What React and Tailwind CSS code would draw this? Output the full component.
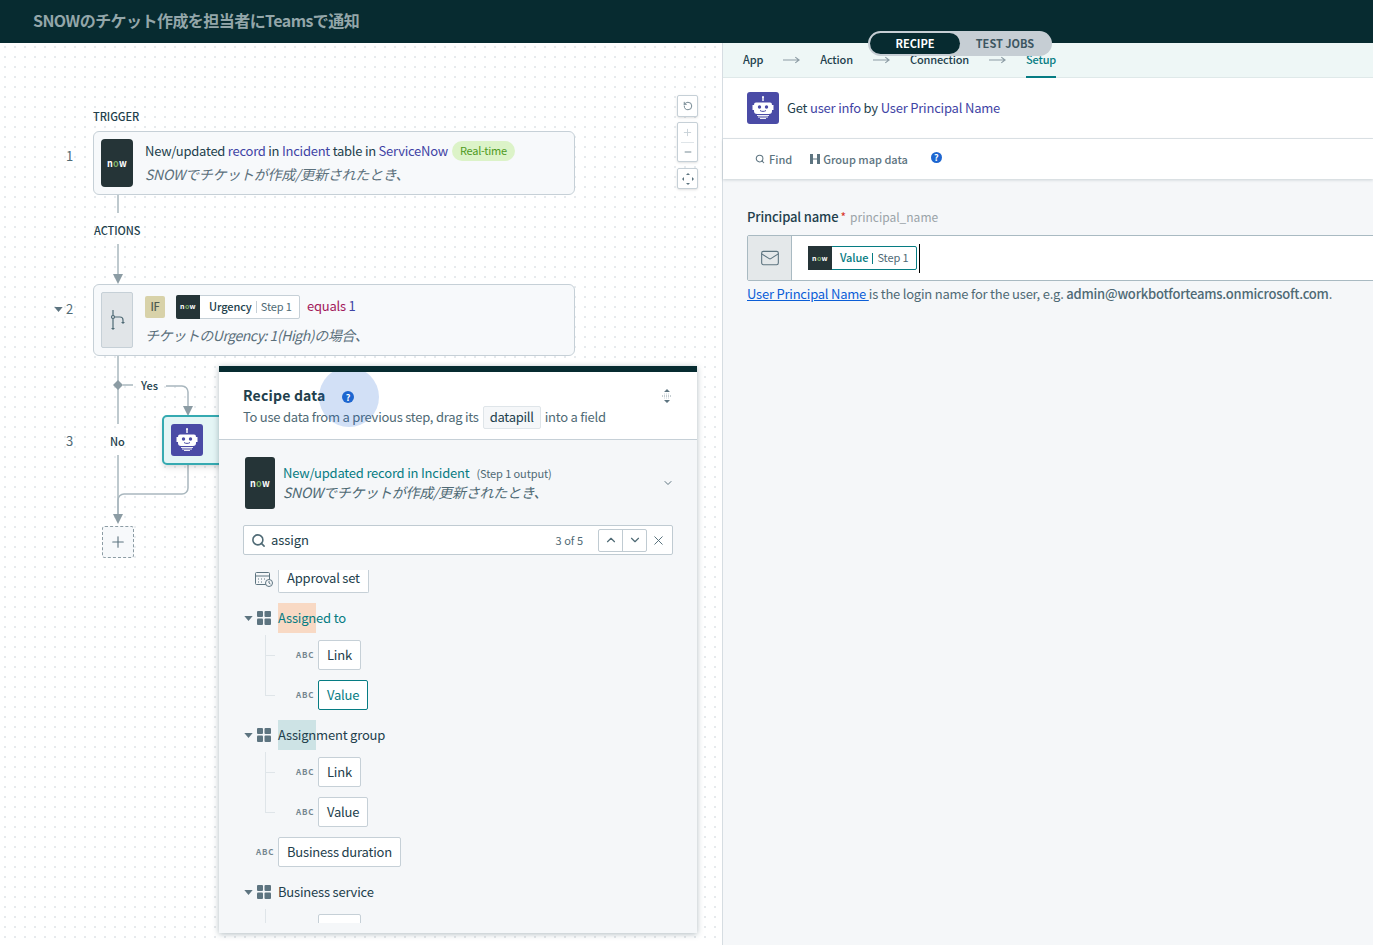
import React from "react";
import { ChevronDown, ChevronUp, X, Search, Plus, Minus, RotateCcw, Mail } from "lucide-react";

const NowLogo = ({ size = "text-[9px]" }) => (
  <span className={`${size} font-bold text-white tracking-[0.3px] leading-none`}>
    n<span className="text-[#7fb069]">o</span>w
  </span>
);

const Bot = ({ className }) => (
  <svg viewBox="0 0 32 32" className={className}>
    <rect width="32" height="32" rx="3" fill="#4a4ba6" />
    <path d="M16 5v4" stroke="#fff" strokeWidth="1.4" />
    <circle cx="16" cy="5" r="1" fill="#fff" />
    <path d="M9 10.500h14a2 2 0 0 1 2 2V19a3 3 0 0 1-3 3H10a3 3 0 0 1-3-3v-6.500a2 2 0 0 1 2-2z" fill="#fff" />
    <rect x="5.500" y="13" width="1.500" height="5" fill="#fff" />
    <rect x="25" y="13" width="1.500" height="5" fill="#fff" />
    <circle cx="12.500" cy="15" r="1.700" fill="#4a4ba6" />
    <circle cx="19.500" cy="15" r="1.700" fill="#4a4ba6" />
    <path d="M13 18.500c1.500 1.200 4.500 1.200 6 0" stroke="#4a4ba6" strokeWidth="1" fill="none" />
    <path d="M10 23.500h12M11 25h10M13 26.500h6" stroke="#fff" strokeWidth="0.900" />
  </svg>
);

const Help = ({ className }) => (
  <span className={`inline-flex items-center justify-center rounded-full bg-[#1e66d0] text-white font-bold leading-none text-[9px] ${className}`}>?</span>
);

const Abc = () => (
  <span className="text-[8px] font-bold tracking-[0.8px] text-[#73858f] leading-none">ABC</span>
);

const GridIcon = () => (
  <svg viewBox="0 0 14 14" className="w-[14px] h-[14px]" fill="#5d7480">
    <rect width="6" height="6" rx="1" />
    <rect x="7.500" width="6.500" height="6" rx="1" />
    <rect y="7.500" width="6" height="6.500" rx="1" />
    <rect x="7.500" y="7.500" width="6.500" height="6.500" rx="1" />
  </svg>
);

const Caret = () => (
  <svg viewBox="0 0 10 6" className="w-[9px] h-[5px]" fill="#5d7480"><path d="M0 0h10L5 6z" /></svg>
);

const Pill = ({ children, active }) => (
  <span className={`h-[30px] min-w-[43px] px-2 pb-[1px] inline-flex items-center bg-white rounded-[2px] border text-[13px] tracking-[-0.2px] ${active ? "border-[#067c83] text-[#067c83]" : "border-[#c6d0d7] text-[#22404c]"}`}>
    {children}
  </span>
);

const SubTree = ({ highlight, hlText, rest, textColor, children }) => (
  <div className="flex flex-col">
    <div className="h-[30px] flex items-center">
      <span className="w-[10px] ml-[24px] flex justify-center mr-[4px]"><Caret /></span>
      <GridIcon />
      <span className={`ml-[7px] text-[13px] tracking-[-0.2px] h-[30px] flex items-center whitespace-nowrap ${textColor}`}>
        <span className={`h-[30px] flex items-center pb-[1px] ${highlight}`}>{hlText}</span>
        <span className="pb-[1px]">{rest}</span>
      </span>
    </div>
    {children}
  </div>
);

const Leaf = ({ label, active, last }) => (
  <div className="h-[30px] flex items-center relative">
    <span className="absolute left-[46px] w-[10px] border-b border-[#dfe5e9] top-[15px]" />
    <span className={`absolute left-[46px] w-px bg-[#dfe5e9] ${last ? "top-[-25px] h-[40px]" : "top-[-5px] h-[20px]"}`} />
    <span className="ml-[77px] w-[22px] flex items-center"><Abc /></span>
    <Pill active={active}>{label}</Pill>
  </div>
);

export default function App() {
  return (
    <div className="w-[1373px] h-[945px] overflow-hidden relative flex flex-col bg-white text-[#22404c] font-['Noto_Sans_CJK_JP','Noto_Sans',sans-serif] leading-[18px]">
      <header className="h-[43px] shrink-0 bg-[#072b30] flex items-center pl-[33px] pb-[4px]">
        <h1 className="text-[16px] font-bold text-[#93a6a9] tracking-[-0.55px]">SNOWのチケット作成を担当者にTeamsで通知</h1>
      </header>

      <div className="absolute left-[868px] top-[31px] w-[184px] h-[25px] bg-[#c6ced4] rounded-full flex items-center p-[2px] z-20 text-[11px] font-semibold">
        <span className="w-[90px] h-[21px] bg-[#072b30] text-white rounded-full flex items-center justify-center pb-[1px]">RECIPE</span>
        <span className="flex-1 text-[#3d5661] text-center pb-[1px]">TEST JOBS</span>
      </div>

      <div className="flex flex-1 min-h-0">
        {/* Canvas */}
        <div className="w-[722px] shrink-0 relative bg-white bg-[radial-gradient(#e6eaed_1px,transparent_1.2px)] bg-[length:10px_10px] bg-[position:0px_-1px]">
          <svg className="absolute left-0 top-0 w-[722px] h-[902px]" viewBox="0 0 722 902" fill="none" stroke="#a9b7be" strokeWidth="1.500">
            <path d="M118 152v18" />
            <path d="M118 201v32" />
            <path d="M118 313v68" />
            <path d="M118 412v65" />
            <path d="M166 343h16a6 6 0 0 1 6 6v16" />
            <path d="M188 421v24a6 6 0 0 1-6 6h-58a6 6 0 0 0-6 6v20" />
            <path d="M113 231h10l-5 10z" fill="#8c9ca4" stroke="none" />
            <path d="M183 363h10l-5 10z" fill="#8c9ca4" stroke="none" />
            <path d="M113 471h10l-5 10z" fill="#8c9ca4" stroke="none" />
            <path d="M118 337l5 5-5 5-5-5z" fill="#8c9ca4" stroke="none" />
            <path d="M123 342h10" />
          </svg>

          <span className="absolute left-[93px] top-[64px] text-[11px] font-medium tracking-[-0.05px] text-[#22404c]">TRIGGER</span>
          <span className="absolute left-[94px] top-[178px] text-[11px] font-medium tracking-[-0.05px] text-[#22404c]">ACTIONS</span>
          <span className="absolute left-[66px] top-[104px] text-[13px] text-[#4f6a75]">1</span>
          <span className="absolute left-[54px] top-[257px] text-[13px] text-[#4f6a75] flex items-center gap-[3px]">
            <Caret />2
          </span>
          <span className="absolute left-[66px] top-[389px] text-[13px] text-[#4f6a75]">3</span>
          <span className="absolute left-[141px] top-[333px] text-[11px] font-medium">Yes</span>
          <span className="absolute left-[110px] top-[389px] text-[11px] font-medium">No</span>

          {/* Trigger card */}
          <div className="absolute left-[93px] top-[88px] w-[482px] h-[64px] bg-[#f7f9fb] border border-[#c6d0d7] rounded-[6px] flex items-center pl-[7px]">
            <div className="w-[32px] h-[48px] bg-[#253437] rounded-[4px] flex items-center justify-center"><NowLogo /></div>
            <div className="ml-[12px] flex flex-col gap-[4px] -mt-[2px]">
              <div className="flex items-center text-[13px] tracking-[-0.25px] h-[20px]">
                <span>New/updated <span className="text-[#3f44a5]">record</span> in <span className="text-[#3f44a5]">Incident</span> table in <span className="text-[#3f44a5]">ServiceNow</span></span>
                <span className="ml-[4px] h-[20px] px-[8px] pb-[2px] rounded-full bg-[#dcf3c8] text-[#4f9a1e] text-[11px] flex items-center">Real-time</span>
              </div>
              <span className="text-[14px] tracking-[-0.25px] italic text-[#5b707b]">SNOWでチケットが作成/更新されたとき、</span>
            </div>
          </div>

          {/* IF card */}
          <div className="absolute left-[93px] top-[241px] w-[482px] h-[72px] bg-[#f7f9fb] border border-[#c6d0d7] rounded-[6px] flex items-center pl-[7px]">
            <div className="w-[32px] h-[56px] bg-[#e1e5e8] border border-[#c6d0d7] rounded-[2px] flex items-center justify-center">
              <svg viewBox="0 0 18 24" className="w-[18px] h-[24px]" fill="none" stroke="#4f6a75" strokeWidth="1.200">
                <path d="M5 2v19M5 9h7a3 3 0 0 1 3 3v2" />
                <circle cx="5" cy="9" r="1.500" fill="#e1e5e8" />
                <path d="M3 20h4l-2 2zM13 14h4l-2 2z" fill="#4f6a75" stroke="none" />
              </svg>
            </div>
            <div className="ml-[12px] flex flex-col gap-[7px] -mt-[2px]">
              <div className="flex items-center h-[24px] text-[13px] tracking-[-0.25px]">
                <span className="w-[20px] h-[22px] pb-[1px] bg-[#d8d2a9] rounded-[2px] text-[#4f5a50] text-[11px] font-medium flex items-center justify-center">IF</span>
                <span className="ml-[11px] h-[24px] w-[124px] bg-white border border-[#c6d0d7] rounded-[2px] flex items-center text-[11px] tracking-[-0.1px] whitespace-nowrap">
                  <span className="w-[24px] h-[24px] -ml-px bg-[#253437] rounded-l-[2px] flex items-center justify-center"><NowLogo size="text-[7px]" /></span>
                  <span className="ml-[9px] font-medium pb-[1px]">Urgency</span>
                  <span className="mx-[4px] h-[12px] border-l border-[#c6d0d7]" />
                  <span className="text-[#4f6a75] pb-[1px]">Step 1</span>
                </span>
                <span className="ml-[7px] text-[#a3195b] pb-[2px]">equals <span className="text-[#3f44a5]">1</span></span>
              </div>
              <span className="text-[14px] tracking-[-0.45px] italic text-[#5b707b]">チケットのUrgency: 1(High)の場合、</span>
            </div>
          </div>

          {/* Step 3 card */}
          <div className="absolute left-[162px] top-[372px] w-[80px] h-[50px] bg-[#e4f5f5] border-2 border-[#35aab1] rounded-[5px] flex items-center pl-[7px] shadow-md">
            <Bot className="w-[32px] h-[32px]" />
          </div>

          {/* Add */}
          <div className="absolute left-[102px] top-[483px] w-[32px] h-[32px] bg-[#f7f9fb] border border-dashed border-[#8c9ca4] rounded-[3px] flex items-center justify-center text-[#5d7480]">
            <Plus size={18} strokeWidth={1.5} />
          </div>

          {/* Zoom controls */}
          <div className="absolute left-[677px] top-[52px] flex flex-col w-[21px] text-[#5d7480]">
            <span className="h-[22px] bg-white border border-[#c6d0d7] rounded-[2px] flex items-center justify-center shadow-sm"><RotateCcw size={10} /></span>
            <span className="mt-[5px] h-[40px] bg-white border border-[#c6d0d7] rounded-[2px] flex flex-col items-center justify-between py-[4px] shadow-sm">
              <Plus size={11} className="text-[#c6d0d7]" />
              <span className="w-[13px] border-t border-[#dfe5e9]" />
              <Minus size={10} />
            </span>
            <span className="mt-[6px] h-[21px] bg-white border border-[#c6d0d7] rounded-[2px] flex items-center justify-center shadow-sm">
              <svg viewBox="0 0 12 12" className="w-[12px] h-[12px]" fill="#5d7480">
                <path d="M6 0l2 2H4zM6 12l2-2H4zM0 6l2-2v4zM12 6l-2-2v4z" />
              </svg>
            </span>
          </div>

          {/* Recipe data panel */}
          <div className="absolute left-[219px] top-[323px] w-[478px] h-[567px] border-t-[6px] border-[#062b30] bg-[#f5f7f9] shadow-[0_1px_6px_rgba(30,60,75,0.35)] flex flex-col overflow-hidden">
            <div className="h-[68px] shrink-0 bg-white border-b border-[#c6d0d7] px-[24px] pt-[13px] relative">
              <div className="flex items-center h-[20px]">
                <span className="text-[14px] font-bold tracking-[0.2px] text-[#22404c]">Recipe data</span>
              </div>
              <div className="mt-[1px] flex items-center text-[13px] tracking-[-0.25px] text-[#4f6a75] whitespace-nowrap">
                <span className="pb-[2px]">To use data from a previous step, drag its</span>
                <span className="mx-[4px] h-[23px] px-[6px] pb-[2px] flex items-center bg-[#f5f7f9] border border-[#dfe5e9] rounded-[2px] text-[#22404c]">datapill</span>
                <span className="pb-[2px]">into a field</span>
              </div>
              <span className="absolute left-[100px] top-[-5px] w-[60px] h-[60px] rounded-full bg-[#1e66d0]/20" />
              <Help className="absolute left-[123px] top-[19px] w-[12px] h-[12px]" />
              <svg viewBox="0 0 12 14" className="absolute right-[24px] top-[17px] w-[12px] h-[14px]" fill="#5d7480">
                <path d="M6 0l3 3H3zM6 14l3-3H3z" />
                <path d="M1 7h10" stroke="#8c9ca4" strokeDasharray="1 1" />
                <path d="M3 5h6M3 9h6" stroke="#c6d0d7" strokeDasharray="1 1" />
              </svg>
            </div>

            <div className="flex-1 min-h-0 overflow-hidden flex flex-col">
              <div className="ml-[26px] mr-[24px] mt-[17px] h-[52px] flex items-center shrink-0">
                <div className="w-[30px] h-[52px] bg-[#253437] rounded-[3px] flex items-center justify-center"><NowLogo /></div>
                <div className="ml-[8px] flex-1 flex flex-col gap-[1px] -mt-[2px]">
                  <div className="flex items-baseline">
                    <span className="text-[13px] tracking-[-0.2px] text-[#067c83]">New/updated record in Incident</span>
                    <span className="ml-[7px] text-[11px] tracking-[-0.1px] text-[#4f6a75]">(Step 1 output)</span>
                  </div>
                  <span className="text-[14px] tracking-[-0.25px] italic text-[#4f6a75]">SNOWでチケットが作成/更新されたとき、</span>
                </div>
                <ChevronDown size={12} className="text-[#5d7480] mr-[-1px]" />
              </div>

              <div className="mx-[24px] mt-[16px] h-[30px] shrink-0 bg-white border border-[#c0cbd2] rounded-[2px] flex items-center pl-[7px] pr-[6px]">
                <Search size={15} strokeWidth={2.5} className="text-[#4f6a75]" />
                <span className="ml-[5px] pb-[1px] text-[13px] tracking-[-0.1px] flex-1">assign</span>
                <span className="text-[11px] pb-[1px] text-[#4f6a75] mr-[15px]">3 of 5</span>
                <span className="h-[23px] w-[49px] border border-[#c0cbd2] rounded-[2px] flex text-[#4f6a75]">
                  <span className="flex-1 flex items-center justify-center border-r border-[#c0cbd2]"><ChevronUp size={14} /></span>
                  <span className="flex-1 flex items-center justify-center"><ChevronDown size={14} /></span>
                </span>
                <X size={15} strokeWidth={1.5} className="ml-[4px] text-[#4f6a75]" />
              </div>

              <div className="flex-1 min-h-0 overflow-hidden mt-[15px] mb-[10px] flex flex-col gap-[10px]">
                <div className="h-[23px] flex items-end shrink-0">
                  <svg viewBox="0 0 18 16" className="ml-[36px] mb-[6px] w-[18px] h-[16px]" fill="none" stroke="#5d7480" strokeWidth="1">
                    <rect x="0.500" y="1.500" width="14" height="12" rx="1" />
                    <path d="M0.500 5h14M3 8h1M6 8h1M9 8h1M3 11h1M6 11h1" />
                    <circle cx="14" cy="12" r="3.500" fill="#f5f7f9" />
                    <path d="M14 10v2l1.500 1" />
                  </svg>
                  <span className="ml-[5px] h-[23px] px-2 inline-flex items-end pb-[5px] bg-white rounded-b-[2px] border border-t-0 border-[#c6d0d7] text-[13px] tracking-[-0.2px]">Approval set</span>
                </div>

                <SubTree highlight="bg-[#f8d9c4]" hlText="Assign" rest="ed to" textColor="text-[#067c83]">
                  <div className="mt-[7px] flex flex-col gap-[10px]">
                    <Leaf label="Link" />
                    <Leaf label="Value" active last />
                  </div>
                </SubTree>

                <SubTree highlight="bg-[#cde3e5]" hlText="Assign" rest="ment group" textColor="text-[#22404c]">
                  <div className="mt-[7px] flex flex-col gap-[10px]">
                    <Leaf label="Link" />
                    <Leaf label="Value" last />
                  </div>
                </SubTree>

                <div className="h-[30px] flex items-center shrink-0">
                  <span className="ml-[37px] w-[22px] flex items-center"><Abc /></span>
                  <Pill>Business duration</Pill>
                </div>

                <SubTree highlight="" hlText="Business service" rest="" textColor="text-[#22404c]">
                  <div className="mt-[7px]"><Leaf label="" /></div>
                </SubTree>
              </div>
            </div>
          </div>
        </div>

        {/* Right panel */}
        <div className="flex-1 min-w-0 border-l border-[#d6dde2] bg-[#f5f7f9] flex flex-col">
          <nav className="h-[35px] shrink-0 bg-[#eef7f6] border-b border-[#dfe9e9] flex items-center pl-[20px] text-[11px] tracking-[-0.15px] font-medium">
            <span className="pb-[2px]">App</span>
            <Arrow className="ml-[20px]" />
            <span className="ml-[20px] pb-[2px]">Action</span>
            <Arrow className="ml-[20px]" />
            <span className="ml-[20px] pb-[2px]">Connection</span>
            <Arrow className="ml-[20px]" />
            <span className="ml-[20px] h-[35px] flex items-center border-b-2 border-[#067c83] text-[#067c83]">Setup</span>
          </nav>
          <div className="h-[61px] shrink-0 bg-white border-b border-[#dfe5e9] flex items-center pl-[24px]">
            <Bot className="w-[32px] h-[32px]" />
            <span className="ml-[8px] pb-[1px] text-[13px] tracking-[-0.2px]">Get <span className="text-[#3f44a5]">user info</span> by <span className="text-[#3f44a5]">User Principal Name</span></span>
          </div>
          <div className="h-[40px] shrink-0 bg-white shadow-[0_1px_3px_rgba(30,60,75,0.2)] flex items-center pl-[32px] text-[11px] font-medium text-[#5d7480] relative">
            <Search size={10} strokeWidth={2.5} />
            <span className="ml-[4px] pb-[1px]">Find</span>
            <svg viewBox="0 0 10 10" className="ml-[18px] w-[10px] h-[10px]" fill="#5d7480"><rect width="3" height="10" /><rect x="7" width="3" height="10" /><rect x="3" y="4.500" width="4" height="1" /></svg>
            <span className="ml-[3px] pb-[1px]">Group map data</span>
            <Help className="ml-[23px] -mt-[4px] w-[11px] h-[11px]" />
          </div>
          <div className="px-[24px] pt-[29px] overflow-hidden">
            <div className="flex items-center h-[18px]">
              <span className="text-[13px] tracking-[-0.15px] font-medium">Principal name</span>
              <span className="text-[#d8322a] ml-[2px] text-[12px]">*</span>
              <span className="ml-[4px] text-[12px] text-[#9aa3a8]">principal_name</span>
            </div>
            <div className="mt-[9px] h-[46px] w-[700px] bg-white border border-[#a9bac2] rounded-l-[2px] flex">
              <span className="w-[44px] bg-[#e4e8ea] border-r border-[#a9bac2] flex items-center justify-center text-[#5d7480]">
                <Mail size={20} strokeWidth={1.3} />
              </span>
              <span className="ml-[16px] self-center h-[24px] w-[109px] border border-[#067c83] rounded-[2px] bg-white flex items-center text-[11px] tracking-[-0.1px] whitespace-nowrap">
                <span className="w-[24px] h-[24px] -ml-px bg-[#253437] flex items-center justify-center"><NowLogo size="text-[7px]" /></span>
                <span className="ml-[8px] font-medium text-[#067c83] pb-[2px]">Value</span>
                <span className="mx-[4px] h-[11px] border-l border-[#067c83]" />
                <span className="text-[#4f6a75] pb-[2px]">Step 1</span>
              </span>
              <span className="ml-[2px] self-center h-[29px] w-px bg-black" />
            </div>
            <p className="mt-[3px] text-[13px] tracking-[-0.22px] text-[#4f6a75] whitespace-nowrap leading-[20px]">
              <span className="text-[#0b5ed7] underline">User Principal Name </span>is the login name for the user, e.g. <span className="font-medium">admin@workbotforteams.onmicrosoft.com</span>.
            </p>
          </div>
        </div>
      </div>
    </div>
  );
}

function Arrow({ className }) {
  return (
    <svg viewBox="0 0 18 8" className={`w-[17px] h-[8px] ${className}`} fill="none" stroke="#8c9ca4" strokeWidth="1.200">
      <path d="M0 4h17M13 1l4 3-4 3" />
    </svg>
  );
}
